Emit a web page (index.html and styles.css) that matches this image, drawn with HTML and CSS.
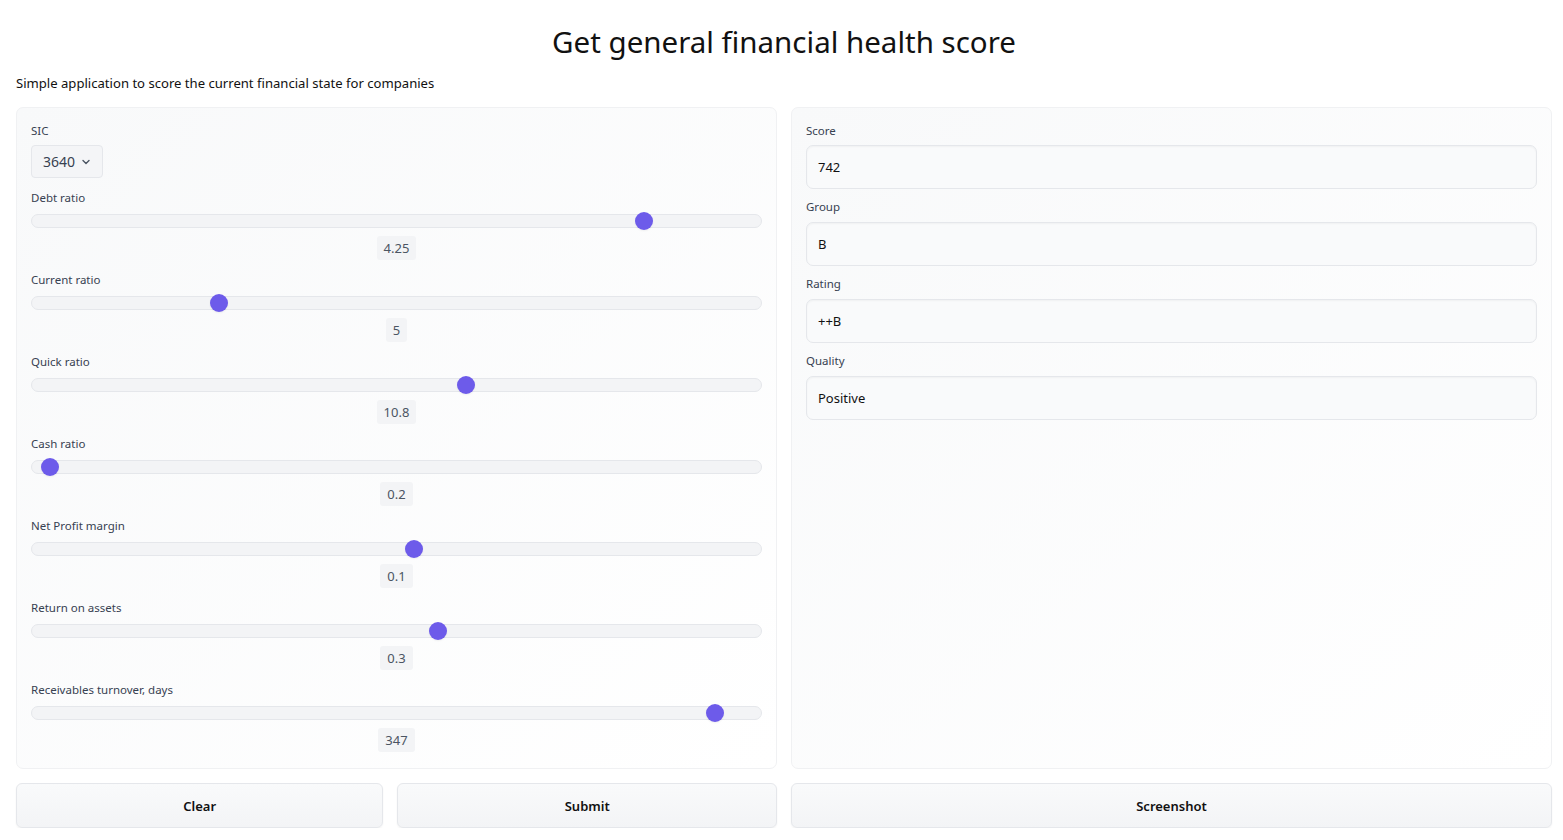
FILE: index.html
```html
<!DOCTYPE html>
<html lang="en">
<head>
<meta charset="utf-8">
<title>Get general financial health score</title>
<link rel="stylesheet" href="styles.css">
</head>
<body>
<div class="app">
  <h1 class="title">Get general financial health score</h1>
  <p class="desc">Simple application to score the current financial state for companies</p>
  <div class="columns">
    <div class="col">
      <div class="panel">
        <div class="field">
          <div class="label">SIC</div>
          <div class="select">3640 <svg class="chev" width="8" height="6" viewBox="0 0 8 6"><path d="M1 1.5 L4 4.5 L7 1.5" fill="none" stroke="#4b5563" stroke-width="1.4" stroke-linecap="round" stroke-linejoin="round"/></svg></div>
        </div>
        <div class="field">
          <div class="label">Debt ratio</div>
          <div class="track"><span class="thumb" style="left:84%"></span></div>
          <div class="valrow"><span class="val">4.25</span></div>
        </div>
        <div class="field">
          <div class="label">Current ratio</div>
          <div class="track"><span class="thumb" style="left:25.6%"></span></div>
          <div class="valrow"><span class="val">5</span></div>
        </div>
        <div class="field">
          <div class="label">Quick ratio</div>
          <div class="track"><span class="thumb" style="left:59.6%"></span></div>
          <div class="valrow"><span class="val">10.8</span></div>
        </div>
        <div class="field">
          <div class="label">Cash ratio</div>
          <div class="track"><span class="thumb" style="left:2.5%"></span></div>
          <div class="valrow"><span class="val">0.2</span></div>
        </div>
        <div class="field">
          <div class="label">Net Profit margin</div>
          <div class="track"><span class="thumb" style="left:52.4%"></span></div>
          <div class="valrow"><span class="val">0.1</span></div>
        </div>
        <div class="field">
          <div class="label">Return on assets</div>
          <div class="track"><span class="thumb" style="left:55.7%"></span></div>
          <div class="valrow"><span class="val">0.3</span></div>
        </div>
        <div class="field">
          <div class="label">Receivables turnover, days</div>
          <div class="track"><span class="thumb" style="left:93.7%"></span></div>
          <div class="valrow"><span class="val">347</span></div>
        </div>
      </div>
      <div class="buttons">
        <button class="btn">Clear</button>
        <button class="btn">Submit</button>
      </div>
    </div>
    <div class="col">
      <div class="panel">
        <div class="ofield">
          <div class="label">Score</div>
          <div class="output">742</div>
        </div>
        <div class="ofield">
          <div class="label">Group</div>
          <div class="output">B</div>
        </div>
        <div class="ofield">
          <div class="label">Rating</div>
          <div class="output">++B</div>
        </div>
        <div class="ofield">
          <div class="label">Quality</div>
          <div class="output">Positive</div>
        </div>
      </div>
      <div class="buttons">
        <button class="btn">Screenshot</button>
      </div>
    </div>
  </div>
</div>
</body>
</html>
```

FILE: styles.css
```css
* { box-sizing: border-box; }
html, body { margin: 0; padding: 0; background: #fff; }
body {
  font-family: "Noto Sans", "Open Sans", sans-serif;
  color: #111827;
}
.app {
  padding: 0 11px 0 16px;
}
.title {
  margin: 0;
  padding-top: 22px;
  height: 68px;
  text-align: center;
  font-weight: 400;
  font-size: 29.5px;
  line-height: 40px;
  color: #111;
}
.desc {
  margin: 0;
  font-size: 13.1px;
  line-height: 18px;
  height: 39px;
  padding-top: 6px;
  color: #111;
}
.columns {
  display: flex;
  gap: 14px;
}
.col {
  flex: 1 1 0;
  display: flex;
  flex-direction: column;
  gap: 14px;
  min-width: 0;
}
.panel {
  height: 662px;
  border: 1px solid #f0f1f3;
  border-radius: 7px;
  background: linear-gradient(to bottom right, #f8f9fa, #ffffff);
  padding: 14px 14px;
}
.label {
  font-size: 11.5px;
  line-height: 14px;
  height: 16px;
  color: #374151;
  margin-bottom: 7px;
}
.field { margin-bottom: 13px; }
.field:first-child .label { padding-top: 2px; }
.select {
  display: inline-flex;
  align-items: center;
  gap: 7px;
  height: 33px;
  padding: 0 12px 0 11px;
  font-size: 14px;
  color: #374151;
  background: #f4f5f7;
  border: 1px solid #e5e7eb;
  border-radius: 4px;
}
.chev { margin-top: 1px; }
.track {
  position: relative;
  height: 14px;
  background: #f3f4f6;
  border: 1px solid #e5e7eb;
  border-radius: 7px;
  margin-bottom: 8px;
}
.thumb {
  position: absolute;
  top: 50%;
  width: 18px;
  height: 18px;
  border-radius: 50%;
  background: #6d5bea;
  transform: translate(-50%, -50%);
  box-shadow: 0 1px 2px rgba(0,0,0,0.06);
}
.valrow {
  display: flex;
  justify-content: center;
  height: 24px;
}
.val {
  display: inline-block;
  height: 24px;
  line-height: 24px;
  padding: 0 7px;
  font-size: 13px;
  color: #4b5563;
  background: #f3f4f6;
  border-radius: 3px;
}
.ofield { margin-bottom: 10px; }
.ofield .label { padding-top: 1px; }
.ofield:first-child .label { padding-top: 2px; }
.output {
  height: 44px;
  line-height: 42px;
  padding: 0 11px;
  font-size: 13px;
  color: #111;
  background: #f9fafb;
  border: 1px solid #e5e7eb;
  border-radius: 7px;
  box-shadow: inset 0 1px 2px rgba(0,0,0,0.04);
}
.buttons {
  display: flex;
  gap: 14px;
}
.btn {
  flex: 1 1 auto;
  height: 45px;
  font-family: inherit;
  font-size: 13px;
  font-weight: 600;
  color: #111;
  background: linear-gradient(to bottom, #f9fafb, #f3f4f6);
  border: 1px solid #e5e7eb;
  border-radius: 6px;
  box-shadow: 0 1px 2px rgba(0,0,0,0.05);
  cursor: pointer;
}
```
